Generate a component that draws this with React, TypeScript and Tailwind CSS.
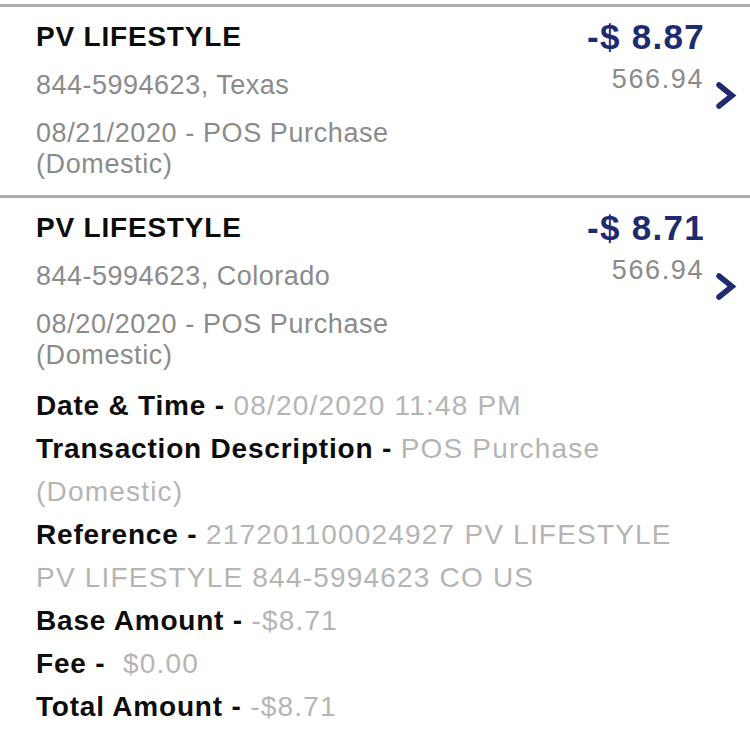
const details = [
  { label: 'Date & Time - ', value: '08/20/2020 11:48 PM' },
  { label: 'Transaction Description - ', value: 'POS Purchase (Domestic)' },
  { label: 'Reference - ', value: '217201100024927 PV LIFESTYLE PV LIFESTYLE 844-5994623 CO US' },
  { label: 'Base Amount - ', value: '-$8.71' },
  { label: 'Fee - ', value: '\u00a0$0.00' },
  { label: 'Total Amount - ', value: '-$8.71' },
];

const transactions = [
  {
    name: 'PV LIFESTYLE',
    place: '844-5994623, Texas',
    desc: '08/21/2020 - POS Purchase (Domestic)',
    amount: '-$ 8.87',
    balance: '566.94',
    expanded: false,
  },
  {
    name: 'PV LIFESTYLE',
    place: '844-5994623, Colorado',
    desc: '08/20/2020 - POS Purchase (Domestic)',
    amount: '-$ 8.71',
    balance: '566.94',
    expanded: true,
  },
];

const Chevron = () => (
  <svg width="22" height="27" viewBox="0 0 22 27" fill="none">
    <path d="M4 3 L17 13.5 L4 24" stroke="#1f2b70" strokeWidth="5.5" strokeLinecap="round" strokeLinejoin="miter" />
  </svg>
);

type Tx = (typeof transactions)[number];

const Row = ({ tx }: { tx: Tx }) => {
  return (
    <div className="border-t-[3px] border-[#ababab] pl-9 pr-[13px] pt-[13px] pb-[15px]">
      <div className="flex items-start">
        <div className="flex-1">
          <div className="text-[28px] leading-[34px] font-bold text-[#0d0d0d] tracking-[0.8px]">{tx.name}</div>
          <div className="mt-4 text-[27px] leading-[31px] text-[#8b8b8b] tracking-[0.5px]">{tx.place}</div>
          <div className="mt-[17px] max-w-[400px] text-[27px] leading-[31px] text-[#8b8b8b] tracking-[0.6px]">{tx.desc}</div>
        </div>
        <div className="flex flex-col items-end">
          <div className="-mr-[1px] text-[35px] leading-[34px] font-bold text-[#1f2b70] tracking-[1.3px]">{tx.amount}</div>
          <div className="mt-[10px] text-[27px] leading-[30px] text-[#8b8b8b] tracking-[1.6px]">{tx.balance}</div>
        </div>
        <div className="ml-[11px] mt-[62px]">
          <Chevron />
        </div>
      </div>
      {tx.expanded && (
        <div className="mt-[13px] w-[660px]">
          {details.map((d) => (
            <div key={d.label} className="text-[28px] leading-[43px]">
              <span className="font-bold text-[#0d0d0d] tracking-[0.8px]">{d.label}</span>
              <span className="text-[#b5b5b5] tracking-[1.2px]">{d.value}</span>
            </div>
          ))}
        </div>
      )}
    </div>
  );
};

export default function App() {
  return (
    <div className="w-[750px] min-h-[754px] bg-white pt-1 font-['Liberation_Sans',Arial,sans-serif]">
      {transactions.map((tx, i) => (
        <Row key={i} tx={tx} />
      ))}
    </div>
  );
}
